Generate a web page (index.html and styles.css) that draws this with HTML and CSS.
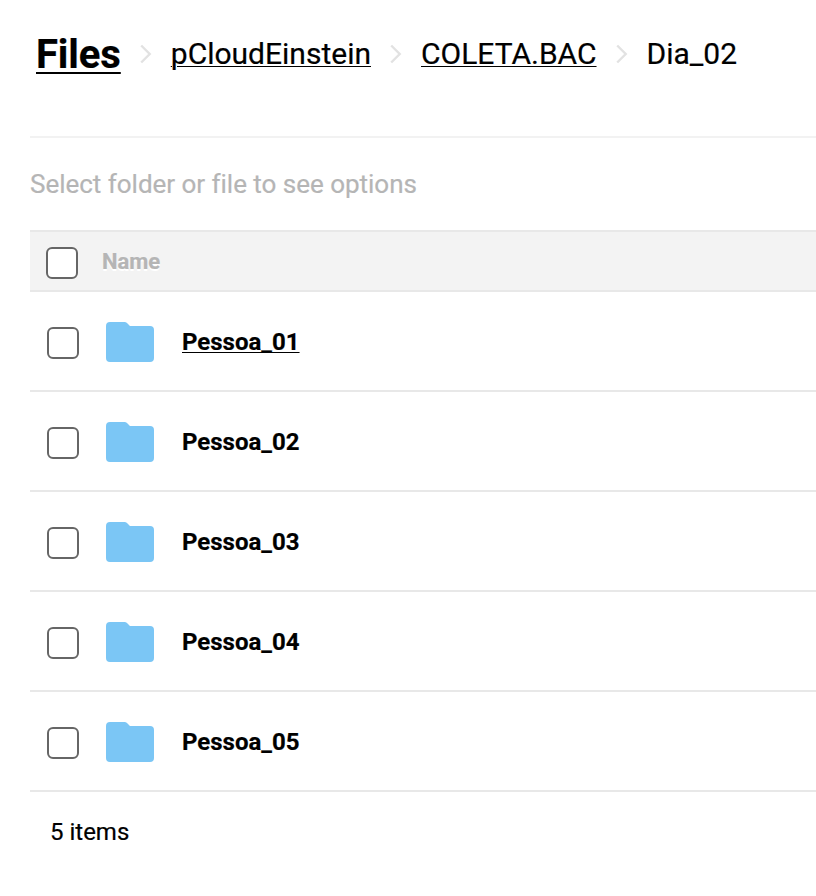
FILE: index.html
```html
<!DOCTYPE html>
<html lang="en">
<head>
<meta charset="utf-8">
<title>Files</title>
<link rel="stylesheet" href="styles.css">
</head>
<body>
<nav class="crumbs">
<a class="root">Files</a>
<svg class="chevron" viewBox="0 0 12 20"><path d="M1.200 1.500l8.500 8.500-8.500 8.500"/></svg>
<a class="crumb">pCloudEinstein</a>
<svg class="chevron" viewBox="0 0 12 20"><path d="M1.200 1.500l8.500 8.500-8.500 8.500"/></svg>
<a class="crumb">COLETA.BAC</a>
<svg class="chevron" viewBox="0 0 12 20"><path d="M1.200 1.500l8.500 8.500-8.500 8.500"/></svg>
<span class="crumb current">Dia_02</span>
</nav>
<main class="browser">
<div class="hint">Select folder or file to see options</div>
<div class="head"><span class="box"></span><span class="label">Name</span></div>
<div class="row"><span class="box"></span><svg class="folder" viewBox="0 0 48 40"><path d="M4 0h14.500q1.500 0 2.500 1l3 3h20a4 4 0 0 1 4 4v28a4 4 0 0 1-4 4H4a4 4 0 0 1-4-4V4a4 4 0 0 1 4-4z"/></svg><span class="name hovered">Pessoa_01</span></div>
<div class="row"><span class="box"></span><svg class="folder" viewBox="0 0 48 40"><path d="M4 0h14.500q1.500 0 2.500 1l3 3h20a4 4 0 0 1 4 4v28a4 4 0 0 1-4 4H4a4 4 0 0 1-4-4V4a4 4 0 0 1 4-4z"/></svg><span class="name">Pessoa_02</span></div>
<div class="row"><span class="box"></span><svg class="folder" viewBox="0 0 48 40"><path d="M4 0h14.500q1.500 0 2.500 1l3 3h20a4 4 0 0 1 4 4v28a4 4 0 0 1-4 4H4a4 4 0 0 1-4-4V4a4 4 0 0 1 4-4z"/></svg><span class="name">Pessoa_03</span></div>
<div class="row"><span class="box"></span><svg class="folder" viewBox="0 0 48 40"><path d="M4 0h14.500q1.500 0 2.500 1l3 3h20a4 4 0 0 1 4 4v28a4 4 0 0 1-4 4H4a4 4 0 0 1-4-4V4a4 4 0 0 1 4-4z"/></svg><span class="name">Pessoa_04</span></div>
<div class="row"><span class="box"></span><svg class="folder" viewBox="0 0 48 40"><path d="M4 0h14.500q1.500 0 2.500 1l3 3h20a4 4 0 0 1 4 4v28a4 4 0 0 1-4 4H4a4 4 0 0 1-4-4V4a4 4 0 0 1 4-4z"/></svg><span class="name">Pessoa_05</span></div>
<div class="count">5 items</div>
</main>
</body>
</html>
```
FILE: styles.css
```css
* { box-sizing: border-box; }
body { margin: 0; background: #fff; color: #000; font-family: Roboto, sans-serif; -webkit-text-stroke: 0.2px; overflow: hidden; }
.crumbs { display: flex; align-items: center; height: 108px; padding-left: 36px; white-space: nowrap; }
.root { font-size: 40px; font-weight: 700; letter-spacing: -0.1px; text-decoration: underline; text-decoration-thickness: 2px; text-underline-offset: 4px; }
.crumb { font-size: 30px; margin-bottom: 2px; text-decoration: underline; text-decoration-thickness: 1px; text-underline-offset: 2px; }
.current { text-decoration: none; }
.chevron { width: 12px; height: 20px; margin: 0 19px; fill: none; stroke: #e2e2e2; stroke-width: 2.4; flex: none; }
.browser { margin: 28px 0 0 30px; border-top: 2px solid #f2f2f2; }
.hint { height: 92px; line-height: 92px; font-size: 26px; letter-spacing: -0.02px; color: #b5b5b5; }
.head { display: flex; align-items: center; height: 62px; padding-left: 16px; background: #f3f3f3; border-top: 2px solid #e8e8e8; border-bottom: 2px solid #e8e8e8; }
.box { width: 32px; height: 32px; margin-top: 4px; border: 2px solid #666; border-radius: 6px; background: #fff; flex: none; }
.label { margin-left: 24px; font-size: 22px; font-weight: 700; color: #b5b5b5; text-shadow: 0 2px 0 #fff; }
.row { display: flex; align-items: center; height: 100px; padding: 2px 0 0 17px; border-bottom: 2px solid #e8e8e8; }
.row .box { margin-top: 2px; }
.folder { width: 48px; height: 40px; margin-left: 27px; fill: #7bc6f5; }
.name { margin-left: 28px; font-size: 24px; font-weight: 700; }
.hovered { text-decoration: underline; text-decoration-thickness: 1px; text-underline-offset: 2px; }
.count { padding-left: 20px; font-size: 24px; line-height: 80px; }
```
